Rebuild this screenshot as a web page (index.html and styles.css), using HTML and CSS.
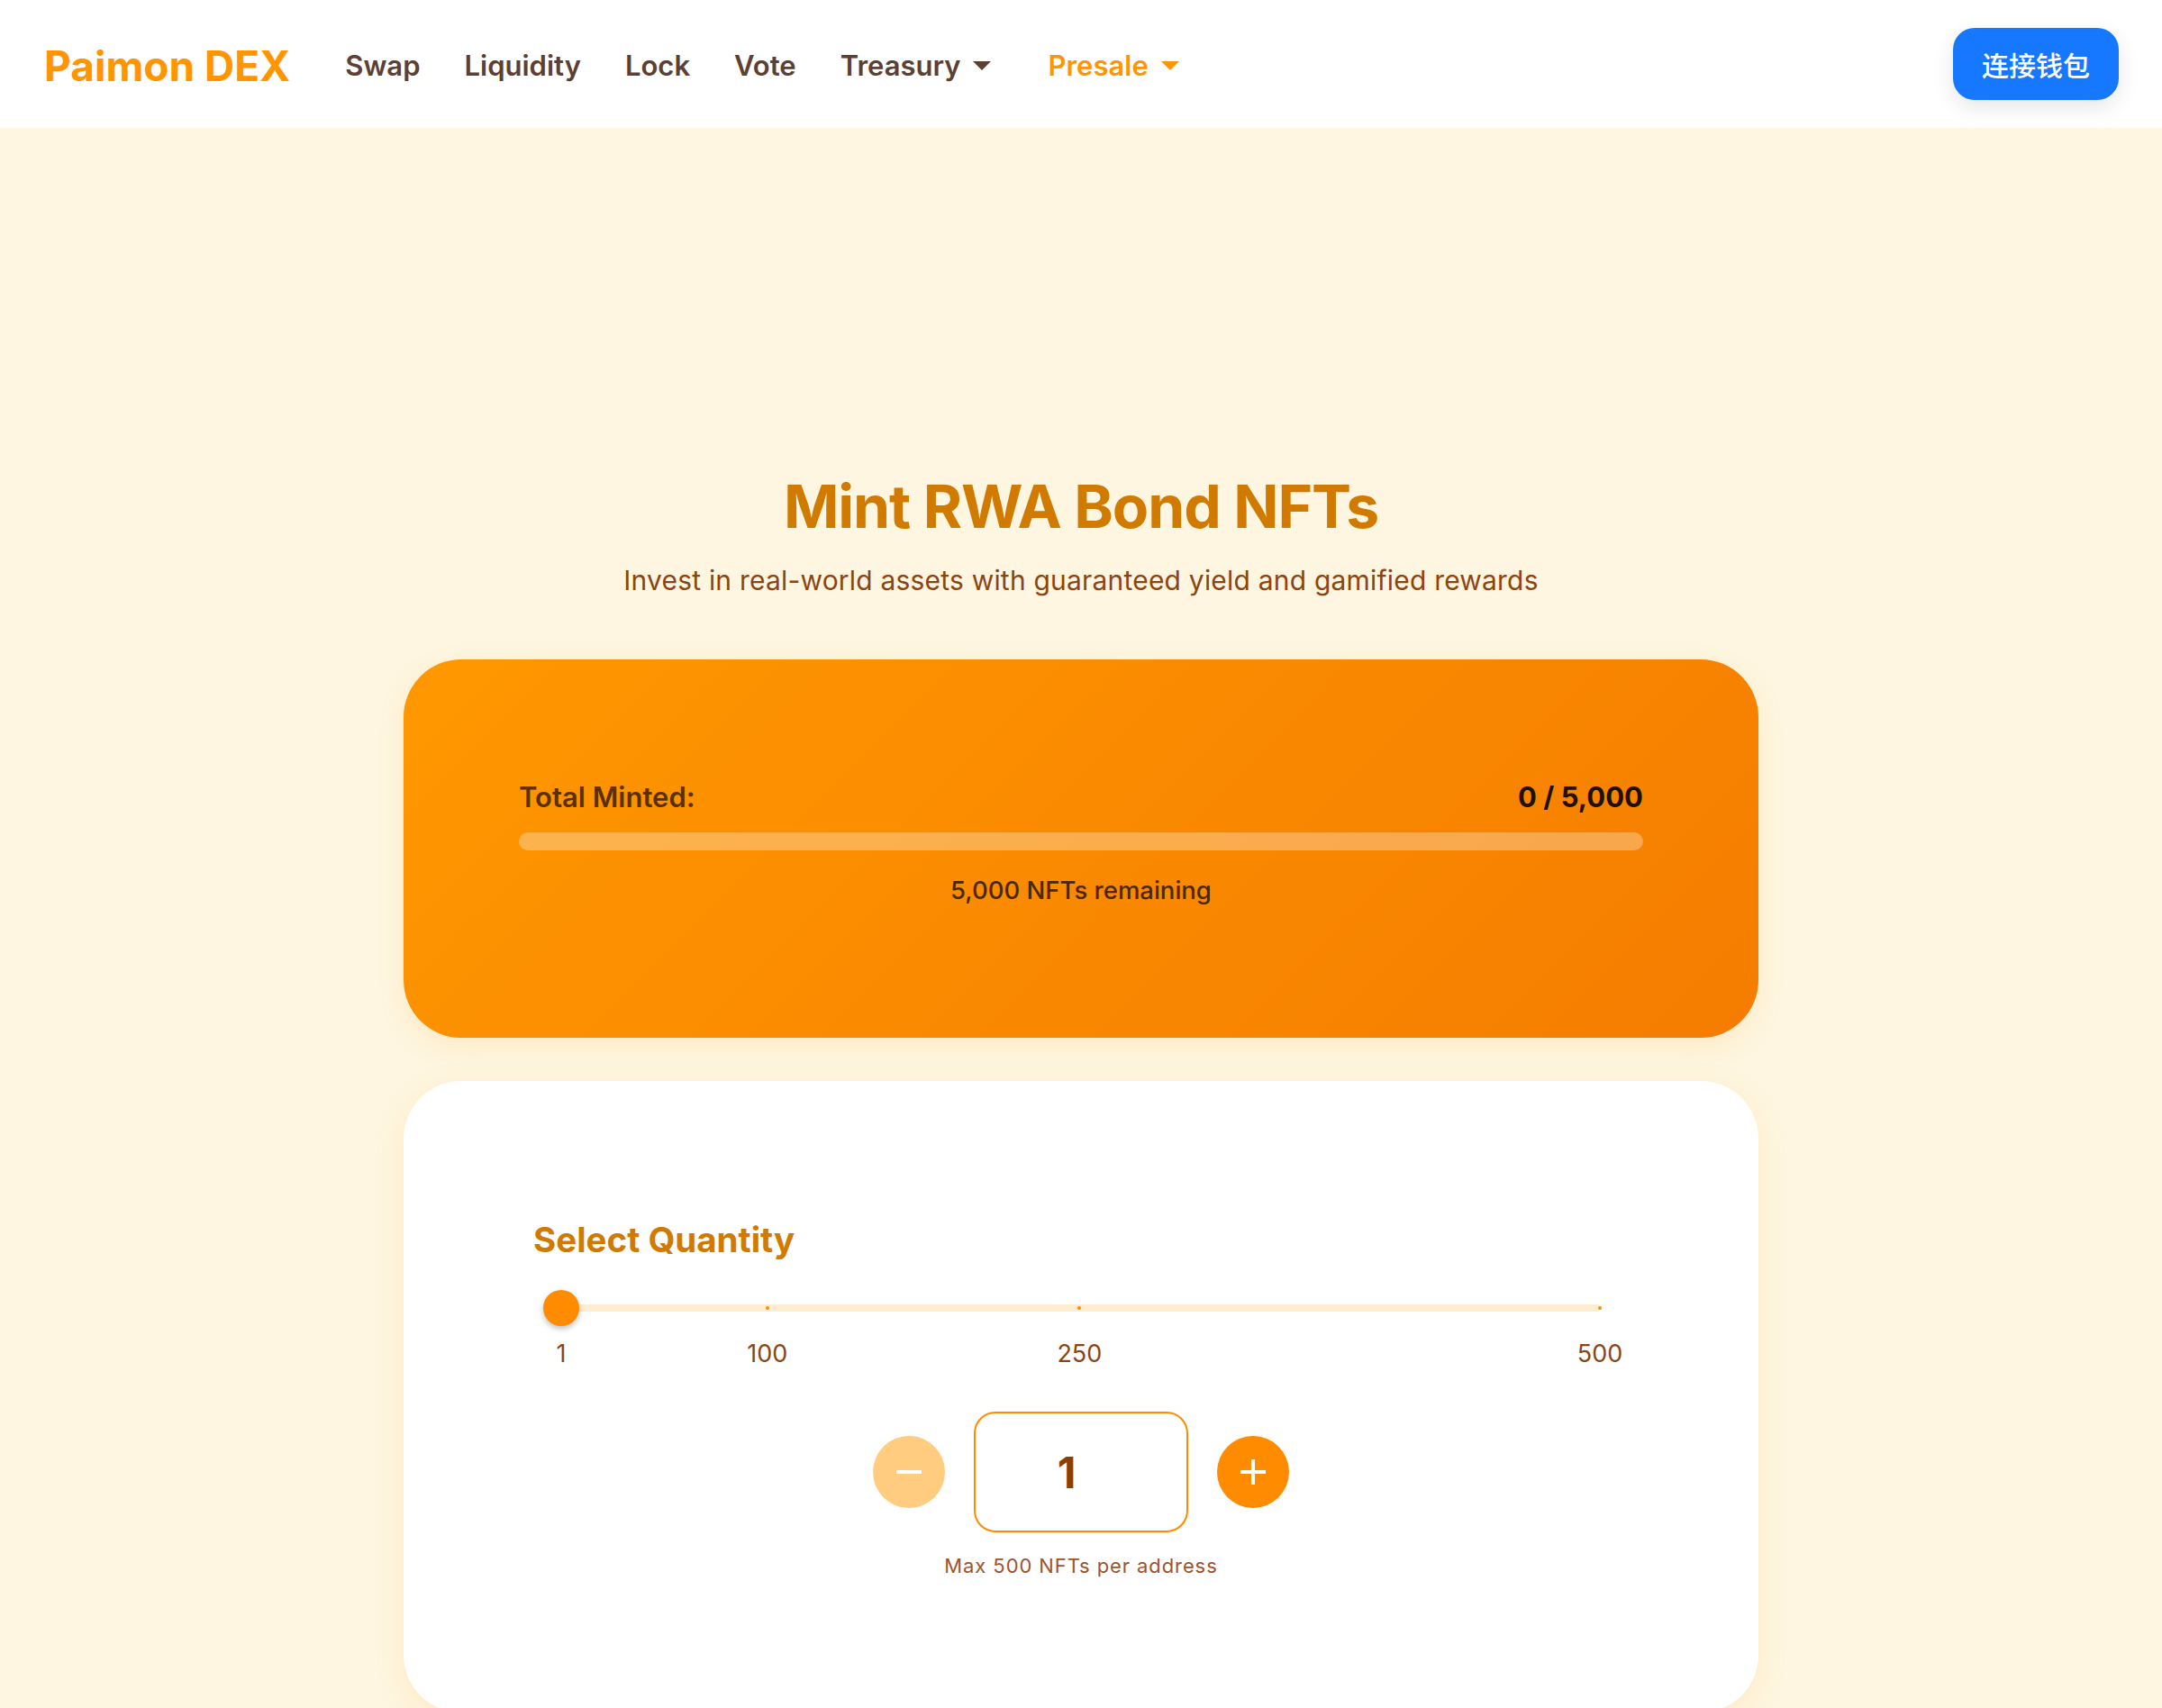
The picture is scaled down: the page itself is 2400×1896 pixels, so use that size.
FILE: index.html
```html
<!DOCTYPE html>
<html lang="en">
<head>
<meta charset="utf-8">
<title>Paimon DEX - Mint RWA Bond NFTs</title>
<link rel="stylesheet" href="styles.css">
</head>
<body>
<header class="nav">
  <div class="logo">Paimon DEX</div>
  <nav class="links">
    <a class="link">Swap</a>
    <a class="link">Liquidity</a>
    <a class="link">Lock</a>
    <a class="link">Vote</a>
    <a class="link dropdown">Treasury <span class="caret"></span></a>
    <a class="link dropdown active">Presale <span class="caret"></span></a>
  </nav>
  <button class="connect">连接钱包</button>
</header>

<main class="main">
  <h1 class="title">Mint RWA Bond NFTs</h1>
  <p class="subtitle">Invest in real-world assets with guaranteed yield and gamified rewards</p>

  <section class="stats-card">
    <div class="stats-row">
      <span class="stats-label">Total Minted:</span>
      <span class="stats-value">0 / 5,000</span>
    </div>
    <div class="progress"><div class="progress-fill" style="width:0%"></div></div>
    <div class="remaining">5,000 NFTs remaining</div>
  </section>

  <section class="mint-card">
    <h2 class="section-title">Select Quantity</h2>
    <div class="slider">
      <div class="track"></div>
      <span class="tick" style="left:19.84%"></span>
      <span class="tick" style="left:49.90%"></span>
      <span class="tick" style="left:100%"></span>
      <span class="thumb" style="left:0%"></span>
    </div>
    <div class="slider-labels">
      <span class="slabel" style="left:0%">1</span>
      <span class="slabel" style="left:19.84%">100</span>
      <span class="slabel" style="left:49.90%">250</span>
      <span class="slabel" style="left:100%">500</span>
    </div>
    <div class="stepper">
      <button class="step minus" aria-label="decrease"><span class="bar-h"></span></button>
      <div class="qty">1</div>
      <button class="step plus" aria-label="increase"><span class="bar-h"></span><span class="bar-v"></span></button>
    </div>
    <p class="max-note">Max 500 NFTs per address</p>
  </section>
</main>
</body>
</html>
```

FILE: styles.css
```css
* { box-sizing: border-box; }

html, body {
  margin: 0;
  padding: 0;
}

body {
  background: #fef6e0;
  font-family: Inter, "Noto Sans", "Noto Sans CJK SC", sans-serif;
  overflow: hidden;
}

/* NAV */
.nav {
  height: 142px;
  background: #ffffff;
  display: flex;
  align-items: center;
  padding: 3px 48px 0 49px;
}

.logo {
  font-size: 46px;
  font-weight: 700;
  color: #ff9500;
}

.links {
  display: flex;
  align-items: center;
  margin-left: 61px;
  gap: 49px;
}

.link {
  font-size: 31px;
  font-weight: 600;
  color: #5c4033;
  display: flex;
  align-items: center;
}

.link.active {
  color: #ff9500;
  margin-left: 14px;
}

.caret {
  display: inline-block;
  width: 0;
  height: 0;
  margin-left: 14px;
  border-left: 10px solid transparent;
  border-right: 10px solid transparent;
  border-top: 10px solid currentColor;
}

.connect {
  margin-left: auto;
  margin-top: -3px;
  width: 184px;
  height: 80px;
  border: none;
  border-radius: 24px;
  background: #1677ff;
  color: #ffffff;
  font-family: "Noto Sans CJK SC", sans-serif;
  font-size: 30px;
  font-weight: 500;
  box-shadow: 0 8px 24px rgba(0, 0, 0, 0.10);
}

/* MAIN */
.main {
  display: flex;
  flex-direction: column;
  align-items: center;
  padding-top: 380px;
}

.title {
  margin: 0;
  font-size: 66px;
  line-height: 80px;
  font-weight: 700;
  color: #d17a00;
  letter-spacing: -1.1px;
}

.subtitle {
  margin: 20px 0 0;
  font-size: 30px;
  line-height: 45px;
  color: #8b4513;
  letter-spacing: 0.2px;
}

.stats-card {
  margin-top: 65px;
  width: 1504px;
  height: 420px;
  border-radius: 64px;
  background: linear-gradient(135deg, #ff9800 0%, #f57c00 100%);
  padding: 128px 128px 0;
  box-shadow: 0 10px 30px rgba(255, 149, 0, 0.12);
}

.stats-row {
  display: flex;
  justify-content: space-between;
  align-items: center;
  height: 48px;
}

.stats-label {
  font-size: 31px;
  font-weight: 600;
  color: #5a3000;
}

.stats-value {
  font-size: 31px;
  font-weight: 700;
  color: #1f1000;
}

.progress {
  margin-top: 16px;
  height: 20px;
  border-radius: 10px;
  background: rgba(255, 255, 255, 0.3);
  overflow: hidden;
}

.progress-fill {
  height: 100%;
  background: #ffffff;
}

.remaining {
  margin-top: 23px;
  text-align: center;
  font-size: 27.5px;
  line-height: 42px;
  font-weight: 500;
  color: #4a2800;
}

.mint-card {
  margin-top: 48px;
  width: 1504px;
  height: 701px;
  border-radius: 64px;
  background: #ffffff;
  padding: 148px 144px 0;
  box-shadow: 0 8px 32px rgba(255, 170, 50, 0.14);
  flex-shrink: 0;
}

.section-title {
  margin: 0;
  font-size: 38.5px;
  line-height: 57px;
  font-weight: 700;
  color: #d17a00;
}

.slider {
  position: relative;
  margin: 27px 32px 0 31px;
  height: 40px;
}

.track {
  position: absolute;
  left: -20px;
  right: 0;
  top: 16px;
  height: 8px;
  border-radius: 4px;
  background: #ffedd1;
}

.tick {
  position: absolute;
  top: 18px;
  width: 4px;
  height: 4px;
  margin-left: -2px;
  border-radius: 50%;
  background: #ff8c00;
}

.thumb {
  position: absolute;
  top: 0;
  width: 40px;
  height: 40px;
  margin-left: -20px;
  border-radius: 50%;
  background: #ff8c00;
  box-shadow: 0 3px 6px rgba(0, 0, 0, 0.25);
}

.slider-labels {
  position: relative;
  margin: 11px 32px 0 31px;
  height: 40px;
}

.slabel {
  position: absolute;
  top: 0;
  transform: translateX(-50%);
  font-size: 27px;
  line-height: 40px;
  color: #8b4513;
}

.stepper {
  margin-top: 44px;
  display: flex;
  justify-content: center;
  align-items: center;
  gap: 32px;
}

.step {
  position: relative;
  width: 80px;
  height: 80px;
  border: none;
  border-radius: 50%;
  padding: 0;
}

.step.minus { background: #ffcc80; }
.step.plus { background: #ff8c00; }

.bar-h {
  position: absolute;
  left: 26px;
  top: 38px;
  width: 28px;
  height: 4px;
  background: #ffffff;
}

.bar-v {
  position: absolute;
  left: 38px;
  top: 26px;
  width: 4px;
  height: 28px;
  background: #ffffff;
}

.qty {
  width: 238px;
  height: 134px;
  border: 2px solid #ff8c00;
  border-radius: 24px;
  display: flex;
  align-items: center;
  justify-content: center;
  padding-right: 32px;
  font-size: 48px;
  font-weight: 700;
  color: #8b4000;
}

.max-note {
  margin: 21px 0 0;
  text-align: center;
  font-size: 22px;
  line-height: 33px;
  color: #a0522d;
  letter-spacing: 0.9px;
}
```
